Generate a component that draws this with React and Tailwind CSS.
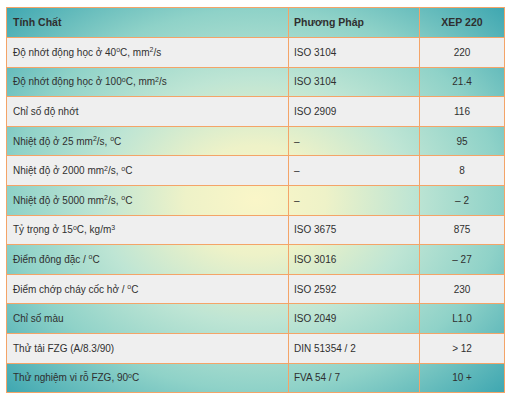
import React from "react";

const O = () => <sup className="text-[7px]">o</sup>;
const S = ({ c }) => <sup className="text-[7px]">{c}</sup>;

const rows = [
  [<>Độ nhớt động học ở 40<O />C, mm<S c="2" />/s</>, "ISO 3104", "220"],
  [<>Độ nhớt động học ở 100<O />C, mm<S c="2" />/s</>, "ISO 3104", "21.4"],
  [<>Chỉ số độ nhớt</>, "ISO 2909", "116"],
  [<>Nhiệt độ ở 25 mm<S c="2" />/s, <O />C</>, "–", "95"],
  [<>Nhiệt độ ở 2000 mm<S c="2" />/s, <O />C</>, "–", "8"],
  [<>Nhiệt độ ở 5000 mm<S c="2" />/s, <O />C</>, "–", "– 2"],
  [<>Tỷ trọng ở 15<O />C, kg/m<S c="3" /></>, "ISO 3675", "875"],
  [<>Điểm đông đặc / <O />C</>, "ISO 3016", "– 27"],
  [<>Điểm chớp cháy cốc hở / <O />C</>, "ISO 2592", "230"],
  [<>Chỉ số màu</>, "ISO 2049", "L1.0"],
  [<>Thử tải FZG (A/8.3/90)</>, "DIN 51354 / 2", "> 12"],
  [<>Thử nghiệm vi rỗ FZG, 90<O />C</>, "FVA 54 / 7", "10 +"],
];

export default function App() {
  return (
    <div className="w-[512px] h-[400px] bg-white pl-[6px] pt-[7px]" style={{ fontFamily: '"Liberation Sans", Arial, sans-serif' }}>
      <div className="w-[499px] border border-[#f4a468] bg-[radial-gradient(ellipse_at_center,#faf6c8_0%,#eef2c8_20%,#bee5d4_45%,#8fd2c8_70%,#3fa7b1_100%)] text-[10px] text-[#2f2f2f]">
        <div className="grid grid-cols-[281px_131px_1fr] h-[29px] font-bold text-[10.5px]">
          <div className="flex items-center pl-[6px]"><span>Tính Chất</span></div>
          <div className="flex items-center pl-[5px] border-l border-[#f4a468]"><span>Phương Pháp</span></div>
          <div className="flex items-center justify-center border-l border-[#f4a468]"><span>XEP 220</span></div>
        </div>
        {rows.map((r, i) => (
          <div
            key={i}
            className={`grid grid-cols-[281px_131px_1fr] h-[29.6px] border-t border-[#f4a468] ${i % 2 === 0 ? "bg-[#efefef]" : ""}`}
          >
            <div className="flex items-center pl-[6px] whitespace-nowrap"><span>{r[0]}</span></div>
            <div className="flex items-center pl-[5px] border-l border-[#f4a468]"><span>{r[1]}</span></div>
            <div className="flex items-center justify-center border-l border-[#f4a468]"><span>{r[2]}</span></div>
          </div>
        ))}
      </div>
    </div>
  );
}
